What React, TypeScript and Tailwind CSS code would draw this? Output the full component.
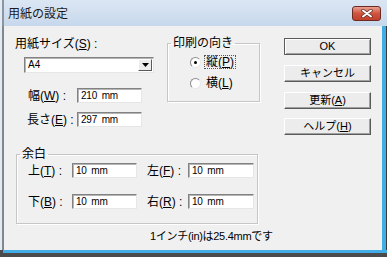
import type { ReactNode } from 'react';

const ui = "font-['Liberation_Sans','Noto_Sans_CJK_JP',sans-serif]";

function Edit({ value, className = '' }: { value: string; className?: string }) {
  return (
    <div
      className={`h-[15px] bg-white border border-t-[#828282] border-l-[#828282] border-b-[#e6e6e6] border-r-[#e6e6e6] shadow-[inset_1px_1px_0_#b4b4b4] pl-[3px] text-[10px] leading-[13px] tracking-[-0.2px] [word-spacing:2px] text-black ${className}`}
    >
      {value}
    </div>
  );
}

function Button({ children, primary = false }: { children: ReactNode; primary?: boolean }) {
  return (
    <div
      className={`h-[17px] flex items-center justify-center text-[11px] leading-[13px] text-black bg-[#ececec] border ${
        primary
          ? 'border-[#5a5a5a] shadow-[inset_1px_1px_0_#fff,inset_-1px_-1px_0_#a0a0a0]'
          : 'border-t-white border-l-white border-r-[#5a5a5a] border-b-[#5a5a5a] shadow-[inset_-1px_-1px_0_#a0a0a0]'
      }`}
    >
      {children}
    </div>
  );
}

function Radio({ checked }: { checked?: boolean }) {
  return (
    <div className="w-[11px] h-[11px] rounded-full bg-white border border-t-[#8c8c8c] border-l-[#8c8c8c] border-b-[#e8e8e8] border-r-[#e8e8e8] flex items-center justify-center">
      {checked ? <div className="w-[3px] h-[3px] rounded-full bg-black" /> : null}
    </div>
  );
}

function Group({ title, className = '', children }: { title: string; className?: string; children: ReactNode }) {
  return (
    <fieldset
      className={`border border-[#c6c6c6] shadow-[inset_1px_1px_0_#fff,1px_1px_0_#fff] ${className}`}
    >
      <legend className="ml-[3px] px-[2px] text-[12px] leading-[12px]">{title}</legend>
      {children}
    </fieldset>
  );
}

export default function App() {
  return (
    <div className={`w-[387px] h-[257px] bg-[#4b4b4b] overflow-hidden text-black ${ui}`}>
      <div className="h-[26px] flex items-center bg-gradient-to-b from-[#dbe6f3] to-[#c7d8ec] border-l-2 border-[#e4eaf1]">
        <div className="w-[2px] self-stretch bg-[#8a96a4]" />
        <div className="ml-[4px] text-[12px] leading-[12px] text-[#1a1a1a] mt-[1px]">用紙の設定</div>
        <div className="ml-auto mr-[6px] w-[29px] h-[15px] rounded-[3px] border border-[#6b2a22] bg-gradient-to-b from-[#e9a191] via-[#d0533e] to-[#c2402c] flex items-center justify-center">
          <svg width="12" height="9" viewBox="0 0 12 9">
            <path d="M2 1.5 L10 7.5 M10 1.5 L2 7.5" stroke="#5b2a24" strokeWidth="3.4" strokeLinecap="round" />
            <path d="M2 1.5 L10 7.5 M10 1.5 L2 7.5" stroke="#fff" strokeWidth="2" strokeLinecap="round" />
          </svg>
        </div>
      </div>

      <div className="h-[224px] flex">
        <div className="w-[4px] bg-[#7f8791] border-l-2 border-[#e4eaf1]" />
        <div className="flex-1 bg-[#f0f0f0] flex pt-[12px] pl-[11px]">
          <div className="w-[269px] flex flex-col">
            <div className="flex">
              <div className="w-[152px] flex flex-col">
                <div className="text-[12px] leading-[12px]">
                  用紙サイズ(<u>S</u>) :
                </div>
                <div className="mt-[7px] ml-[9px] w-[130px] h-[16px] bg-white border border-t-[#828282] border-l-[#828282] border-b-[#e6e6e6] border-r-[#e6e6e6] shadow-[inset_1px_1px_0_#b4b4b4] flex items-center">
                  <span className="pl-[3px] text-[10px] leading-[12px] flex-1">A4</span>
                  <div className="w-[14px] h-[12px] mr-[1px] bg-[#ececec] border border-t-white border-l-white border-r-[#5a5a5a] border-b-[#5a5a5a] flex items-center justify-center">
                    <svg width="7" height="4" viewBox="0 0 7 4">
                      <path d="M0 0 H7 L3.5 4 Z" fill="#000" />
                    </svg>
                  </div>
                </div>
                <div className="mt-[15px] flex items-center">
                  <span className="ml-[13px] w-[49px] text-[12px] leading-[12px]">
                    幅(<u>W</u>) :
                  </span>
                  <Edit value="210 mm" className="w-[65px]" />
                </div>
                <div className="mt-[9px] flex items-center">
                  <span className="ml-[12px] w-[50px] text-[12px] leading-[12px]">
                    長さ(<u>E</u>) :
                  </span>
                  <Edit value="297 mm" className="w-[65px]" />
                </div>
              </div>

              <Group title="印刷の向き" className="w-[93px] h-[65px] -mt-[1px]">
                <div className="mt-[7px] ml-[22px] flex items-center">
                  <Radio checked />
                  <span className="ml-[4px] px-[1px] text-[12px] leading-[12px] outline outline-1 outline-dotted outline-[#555]">
                    縦(<u>P</u>)
                  </span>
                </div>
                <div className="mt-[9px] ml-[22px] flex items-center">
                  <Radio />
                  <span className="ml-[5px] text-[12px] leading-[12px]">
                    横(<u>L</u>)
                  </span>
                </div>
              </Group>
            </div>

            <Group title="余白" className="mt-[21px] ml-[1px] w-[242px] h-[76px]">
              <div className="mt-[3px] flex items-center">
                <span className="ml-[11px] w-[44px] text-[12px] leading-[12px]">
                  上(<u>T</u>) :
                </span>
                <Edit value="10 mm" className="w-[65px]" />
                <span className="ml-[10px] w-[41px] text-[12px] leading-[12px]">
                  左(<u>F</u>) :
                </span>
                <Edit value="10 mm" className="w-[66px]" />
              </div>
              <div className="mt-[16px] flex items-center">
                <span className="ml-[11px] w-[44px] text-[12px] leading-[12px]">
                  下(<u>B</u>) :
                </span>
                <Edit value="10 mm" className="w-[65px]" />
                <span className="ml-[10px] w-[41px] text-[12px] leading-[12px]">
                  右(<u>R</u>) :
                </span>
                <Edit value="10 mm" className="w-[66px]" />
              </div>
            </Group>

            <div className="mt-[6px] ml-[135px] text-[11px] leading-[12px] tracking-[-0.3px] whitespace-nowrap">
              1インチ(in)は25.4mmです
            </div>
          </div>

          <div className="w-[87px] flex flex-col">
            <Button primary>OK</Button>
            <div className="mt-[10px]">
              <Button>キャンセル</Button>
            </div>
            <div className="mt-[10px]">
              <Button>
                更新(<u>A</u>)
              </Button>
            </div>
            <div className="mt-[9px]">
              <Button>
                ヘルプ(<u>H</u>)
              </Button>
            </div>
          </div>
        </div>
        <div className="w-[5px] bg-[#42ace6] border-r border-[#3a3a3a]" />
      </div>
      <div className="h-[3px] ml-[3px] bg-[#42ace6]" />
    </div>
  );
}
